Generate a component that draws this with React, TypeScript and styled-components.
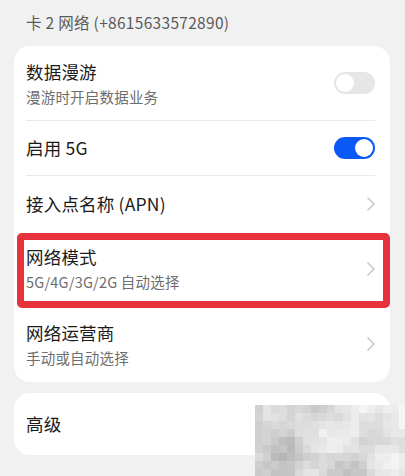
import React from "react";
import styled, { createGlobalStyle } from "styled-components";

const Global = createGlobalStyle`
  html, body { margin: 0; padding: 0; background: #f1f1f1; }
  body { font-family: "Noto Sans CJK SC", "Noto Sans", sans-serif; }
`;

const Page = styled.div`
  position: relative;
  width: 405px;
  height: 476px;
  overflow: hidden;
  background: #f1f1f1;
  padding: 0 15px 0 14px;
  box-sizing: border-box;
`;

const Header = styled.div`
  height: 46px;
  padding: 0 12px;
  display: flex;
  align-items: center;
  padding-bottom: 2px;
  box-sizing: border-box;
  font-size: 15.5px;
  letter-spacing: 0.3px;
  color: #5a5a5a;
`;

const Card = styled.div`
  background: #ffffff;
  border-radius: 16px;
  padding: 0 15px 0 12px;
  display: flex;
  flex-direction: column;
`;

const Row = styled.div<{ $h: number; $divider?: boolean; $highlight?: boolean }>`
  position: relative;
  height: ${(p) => p.$h}px;
  display: flex;
  align-items: center;
  justify-content: space-between;
  border-bottom: ${(p) => (p.$divider ? "1px solid #e9e9e9" : "none")};
  box-sizing: border-box;
  ${(p) =>
    p.$highlight &&
    `
    &::after {
      content: "";
      position: absolute;
      left: -9px;
      right: -15px;
      top: 2px;
      bottom: -2px;
      border: 7px solid #e8323b;
      border-radius: 5px;
      pointer-events: none;
    }
  `}
`;

const Texts = styled.div`
  display: flex;
  flex-direction: column;
  gap: 3px;
`;

const Title = styled.div`
  font-size: 17.5px;
  letter-spacing: 0.2px;
  color: #1b1b1b;
  line-height: 24px;
`;

const Sub = styled.div`
  font-size: 14.5px;
  letter-spacing: 0.2px;
  color: #6e6e6e;
  line-height: 20px;
`;

const Track = styled.div<{ $on?: boolean }>`
  width: 41px;
  height: 22px;
  border-radius: 11px;
  background: ${(p) => (p.$on ? "#0a59f7" : "#e6e6e6")};
  position: relative;
  flex-shrink: 0;
`;

const Knob = styled.div<{ $on?: boolean }>`
  position: absolute;
  top: 2px;
  left: ${(p) => (p.$on ? "21px" : "2px")};
  width: 18px;
  height: 18px;
  border-radius: 50%;
  background: #ffffff;
`;

const Chevron = styled.svg`
  width: 8px;
  height: 14px;
  flex-shrink: 0;
`;

const Gap = styled.div`
  height: 11px;
`;

const Mosaic = styled.svg`
  position: absolute;
  left: 255px;
  top: 405px;
`;

const Toggle = ({ on }: { on?: boolean }) => (
  <Track $on={on}>
    <Knob $on={on} />
  </Track>
);

const Arrow = () => (
  <Chevron viewBox="0 0 8 14">
    <path d="M1 1 L7 7 L1 13" fill="none" stroke="#c9c9c9" strokeWidth="1.6" strokeLinecap="round" strokeLinejoin="round" />
  </Chevron>
);

const cells: { x: number; y: number; v: number }[] = [];
for (let r = 0; r < 9; r++) {
  for (let c = 0; c < 19; c++) {
    const n = Math.sin(c * 12.9898 + r * 78.233) * 43758.5453;
    const rnd = n - Math.floor(n);
    let v =
      222 +
      10 * Math.sin(c * 0.7 + r * 0.4) +
      8 * Math.cos(r * 0.9 - c * 0.35) +
      (rnd - 0.5) * 14 -
      (c < 5 ? 14 : 0) +
      (c > 11 && r < 4 ? 14 : 0) -
      (r > 5 && c < 14 ? 8 : 0);
    v = Math.max(180, Math.min(246, v));
    cells.push({ x: c * 8, y: r * 8, v: Math.round(v) });
  }
}

export default function App() {
  return (
    <Page>
      <Global />
      <Header>卡 2 网络 (+8615633572890)</Header>
      <Card>
        <Row $h={75} $divider>
          <Texts>
            <Title>数据漫游</Title>
            <Sub>漫游时开启数据业务</Sub>
          </Texts>
          <Toggle />
        </Row>
        <Row $h={55} $divider>
          <Title>启用 5G</Title>
          <Toggle on />
        </Row>
        <Row $h={55}>
          <Title>接入点名称 (APN)</Title>
          <Arrow />
        </Row>
        <Row $h={75} $highlight>
          <Texts>
            <Title>网络模式</Title>
            <Sub>5G/4G/3G/2G 自动选择</Sub>
          </Texts>
          <Arrow />
        </Row>
        <Row $h={76}>
          <Texts>
            <Title>网络运营商</Title>
            <Sub>手动或自动选择</Sub>
          </Texts>
          <Arrow />
        </Row>
      </Card>
      <Gap />
      <Card>
        <Row $h={62}>
          <Title>高级</Title>
        </Row>
      </Card>
      <Mosaic width="150" height="71" viewBox="0 0 150 71">
        {cells.map((c, i) => (
          <rect key={i} x={c.x} y={c.y} width="8" height="8" fill={`rgb(${c.v},${c.v},${c.v})`} />
        ))}
      </Mosaic>
    </Page>
  );
}
